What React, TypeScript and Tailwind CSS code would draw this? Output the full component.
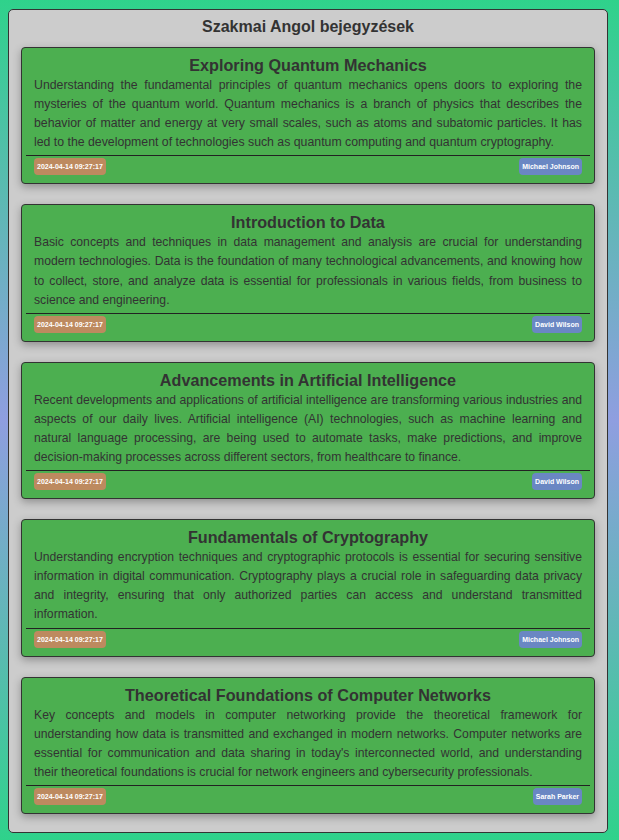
import React from "react";

const posts = [
  {
    title: "Exploring Quantum Mechanics",
    body: "Understanding the fundamental principles of quantum mechanics opens doors to exploring the mysteries of the quantum world. Quantum mechanics is a branch of physics that describes the behavior of matter and energy at very small scales, such as atoms and subatomic particles. It has led to the development of technologies such as quantum computing and quantum cryptography.",
    author: "Michael Johnson",
    size: "text-[12.3px]",
  },
  {
    title: "Introduction to Data",
    body: "Basic concepts and techniques in data management and analysis are crucial for understanding modern technologies. Data is the foundation of many technological advancements, and knowing how to collect, store, and analyze data is essential for professionals in various fields, from business to science and engineering.",
    author: "David Wilson",
    size: "text-[12.2px]",
  },
  {
    title: "Advancements in Artificial Intelligence",
    body: "Recent developments and applications of artificial intelligence are transforming various industries and aspects of our daily lives. Artificial intelligence (AI) technologies, such as machine learning and natural language processing, are being used to automate tasks, make predictions, and improve decision-making processes across different sectors, from healthcare to finance.",
    author: "David Wilson",
    size: "text-[12.2px]",
  },
  {
    title: "Fundamentals of Cryptography",
    body: "Understanding encryption techniques and cryptographic protocols is essential for securing sensitive information in digital communication. Cryptography plays a crucial role in safeguarding data privacy and integrity, ensuring that only authorized parties can access and understand transmitted information.",
    author: "Michael Johnson",
    size: "text-[12.2px]",
  },
  {
    title: "Theoretical Foundations of Computer Networks",
    body: "Key concepts and models in computer networking provide the theoretical framework for understanding how data is transmitted and exchanged in modern networks. Computer networks are essential for communication and data sharing in today's interconnected world, and understanding their theoretical foundations is crucial for network engineers and cybersecurity professionals.",
    author: "Sarah Parker",
    size: "text-[12.2px]",
  },
];

export default function App() {
  return (
    <div
      className="min-h-screen bg-[linear-gradient(to_bottom,#2fd28b_0%,#8f9ee0_50%,#2fd28b_100%)] pt-[9px] pb-[7px] px-[8px] text-[#333]"
      style={{ fontFamily: '"Liberation Sans", Arial, sans-serif' }}
    >
      <div className="w-[600px] bg-[#cccccc] border border-[#333] rounded-[5px] px-[12px] pb-[18px]">
        <h1 className="text-center font-bold text-[16px] leading-[20px] pt-[7px] pb-[10px]">
          Szakmai Angol bejegyzések
        </h1>
        <div className="flex flex-col gap-[20px]">
          {posts.map((p, i) => (
            <div
              key={i}
              className="bg-[#4caf50] border border-[#333] rounded-[4px] px-[4px] pt-[6px] pb-[8px] shadow-[0_3px_8px_rgba(0,0,0,0.3)]"
            >
              <h2 className="text-center font-bold text-[16.2px] leading-[22px]">{p.title}</h2>
              <p className={`px-[8px] ${p.size} leading-[19.1px] text-justify`}>{p.body}</p>
              <div className="mt-[3px] border-t border-[#222]" />
              <div className="flex justify-between items-center px-[8px] mt-[2px]">
                <span className="bg-[#bd8a5f] text-white font-bold text-[7px] leading-[17px] px-[3px] rounded-[4px]">
                  2024-04-14 09:27:17
                </span>
                <span className="bg-[#6a87c3] text-white font-bold text-[7px] leading-[17px] px-[3px] rounded-[4px]">
                  {p.author}
                </span>
              </div>
            </div>
          ))}
        </div>
      </div>
    </div>
  );
}
